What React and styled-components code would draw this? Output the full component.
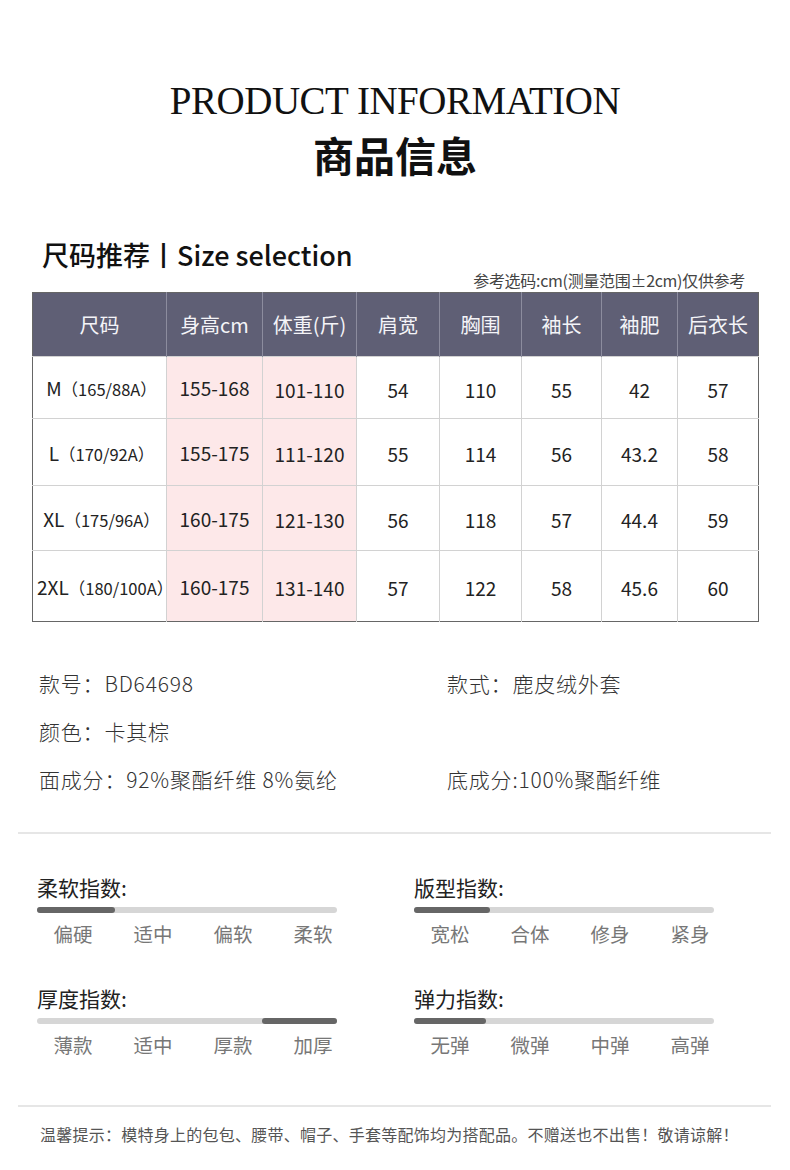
import React from "react";
import styled, { createGlobalStyle } from "styled-components";

const GlobalStyle = createGlobalStyle`
  html, body { margin: 0; padding: 0; background: #ffffff; }
  body { font-family: "Noto Sans CJK SC", "Noto Sans", sans-serif; color: #222; }
  * { box-sizing: border-box; }
`;

const Page = styled.div`
  width: 790px;
  min-height: 1170px;
  background: #fff;
  padding-top: 78px;
  padding-bottom: 20px;
`;

const Hero = styled.header`
  display: flex;
  flex-direction: column;
  align-items: center;
`;

const EnTitle = styled.h1`
  margin: 0;
  font-family: "Liberation Serif", "DejaVu Serif", serif;
  font-weight: 400;
  font-size: 39px;
  line-height: 46px;
  letter-spacing: -0.5px;
  color: #111;
`;

const CnTitle = styled.h2`
  margin: 5px 0 0;
  font-family: "Noto Sans CJK SC", sans-serif;
  font-weight: 700;
  font-size: 41px;
  line-height: 50px;
  color: #111;
`;

const SizeHead = styled.div`
  margin-top: 61px;
  padding: 0 45px 0 42px;
  display: flex;
  flex-direction: column;
`;

const SectionTitle = styled.h3`
  margin: 0;
  font-size: 27px;
  line-height: 30px;
  font-weight: 500;
  color: #111;
`;

const Note = styled.div`
  align-self: flex-end;
  font-size: 16px;
  line-height: 20px;
  color: #444;
  letter-spacing: -0.3px;
`;

const Table = styled.table`
  margin: 2px 0 0 32px;
  width: 726px;
  border-collapse: collapse;
  table-layout: fixed;
  border: 1px solid #666;
`;

const HeadCell = styled.th`
  background: #5f5f75;
  color: #f4f4f8;
  font-weight: 400;
  font-size: 20px;
  height: 64px;
  padding: 0;
  text-align: center;
  border-left: 1px solid #8c8c9e;
  &:first-child { border-left: none; }
`;

const Row = styled.tr`
  height: ${(p) => p.$h}px;
  border-top: 1px solid #d2d2d2;
`;

const Cell = styled.td`
  padding: ${(p) => (p.$raise ? "0" : "3px")} 0 0;
  text-align: center;
  font-size: 19px;
  font-weight: 400;
  color: #222;
  white-space: nowrap;
  background: ${(p) => (p.$pink ? "#fde8e9" : "#fff")};
  border-left: 1px solid #d2d2d2;
  &:first-child { border-left: none; padding-left: 4px; }
`;

const SizeSub = styled.span`
  font-size: 16.5px;
`;

const InfoGrid = styled.div`
  margin-top: 37px;
  padding-left: 39px;
  display: grid;
  grid-template-columns: 408px 1fr;
  grid-auto-rows: 48px;
  align-items: center;
  font-size: 21px;
  letter-spacing: 0.8px;
  font-weight: 300;
  color: #333;
`;

const Divider = styled.hr`
  margin: ${(p) => p.$mt}px 19px 0 18px;
  border: none;
  height: 2px;
  background: #e6e6e6;
`;

const IndexGrid = styled.div`
  margin-top: 39px;
  padding-left: 37px;
  display: grid;
  grid-template-columns: 377px 300px;
  row-gap: 37px;
`;

const IndexGroup = styled.div`
  display: flex;
  flex-direction: column;
`;

const IndexTitle = styled.div`
  font-size: 21px;
  line-height: 28px;
  color: #222;
`;

const Track = styled.div`
  position: relative;
  margin-top: 6px;
  width: 300px;
  height: 6px;
  border-radius: 3px;
  background: #d6d6d6;
`;

const Fill = styled.div`
  position: absolute;
  top: 0;
  bottom: 0;
  border-radius: 3px;
  background: #666;
`;

const Labels = styled.div`
  margin: 8px 0 0 -4px;
  display: grid;
  grid-template-columns: repeat(4, 80px);
`;

const Label = styled.span`
  text-align: center;
  font-size: 19.5px;
  line-height: 26px;
  color: #777;
`;

const Footer = styled.p`
  margin: 15px 0 0 40px;
  font-size: 16px;
  line-height: 24px;
  color: #555;
  letter-spacing: 0.25px;
`;

const headers = ["尺码", "身高cm", "体重(斤)", "肩宽", "胸围", "袖长", "袖肥", "后衣长"];
const widths = [134, 96, 94, 83, 82, 80, 76, 81];

const rows = [
  { size: "M", sub: "（165/88A）", h: "155-168", w: "101-110", vals: ["54", "110", "55", "42", "57"], rh: 62 },
  { size: "L", sub: "（170/92A）", h: "155-175", w: "111-120", vals: ["55", "114", "56", "43.2", "58"], rh: 67 },
  { size: "XL", sub: "（175/96A）", h: "160-175", w: "121-130", vals: ["56", "118", "57", "44.4", "59"], rh: 65 },
  { size: "2XL", sub: "（180/100A）", h: "160-175", w: "131-140", vals: ["57", "122", "58", "45.6", "60"], rh: 71 },
];

const indices = [
  { title: "柔软指数:", labels: ["偏硬", "适中", "偏软", "柔软"], left: 0, width: 78 },
  { title: "版型指数:", labels: ["宽松", "合体", "修身", "紧身"], left: 0, width: 76 },
  { title: "厚度指数:", labels: ["薄款", "适中", "厚款", "加厚"], left: 225, width: 75 },
  { title: "弹力指数:", labels: ["无弹", "微弹", "中弹", "高弹"], left: 0, width: 72 },
];

export default function App() {
  return (
    <Page>
      <GlobalStyle />
      <Hero>
        <EnTitle>PRODUCT INFORMATION</EnTitle>
        <CnTitle>商品信息</CnTitle>
      </Hero>

      <SizeHead>
        <SectionTitle>尺码推荐丨Size selection</SectionTitle>
        <Note>参考选码:cm(测量范围±2cm)仅供参考</Note>
      </SizeHead>

      <Table>
        <colgroup>
          {widths.map((w, i) => (
            <col key={i} style={{ width: w }} />
          ))}
        </colgroup>
        <thead>
          <tr>
            {headers.map((h) => (
              <HeadCell key={h}>{h}</HeadCell>
            ))}
          </tr>
        </thead>
        <tbody>
          {rows.map((r) => (
            <Row key={r.size} $h={r.rh}>
              <Cell $raise>
                {r.size}
                <SizeSub>{r.sub}</SizeSub>
              </Cell>
              <Cell $pink $raise>{r.h}</Cell>
              <Cell $pink>{r.w}</Cell>
              {r.vals.map((v, i) => (
                <Cell key={i}>{v}</Cell>
              ))}
            </Row>
          ))}
        </tbody>
      </Table>

      <InfoGrid>
        <span>款号：BD64698</span>
        <span>款式：鹿皮绒外套</span>
        <span>颜色：卡其棕</span>
        <span />
        <span>面成分：92%聚酯纤维 8%氨纶</span>
        <span>底成分:100%聚酯纤维</span>
      </InfoGrid>

      <Divider $mt={29} />

      <IndexGrid>
        {indices.map((g) => (
          <IndexGroup key={g.title}>
            <IndexTitle>{g.title}</IndexTitle>
            <Track>
              <Fill style={{ left: g.left, width: g.width }} />
            </Track>
            <Labels>
              {g.labels.map((l) => (
                <Label key={l}>{l}</Label>
              ))}
            </Labels>
          </IndexGroup>
        ))}
      </IndexGrid>

      <Divider $mt={47} />

      <Footer>温馨提示：模特身上的包包、腰带、帽子、手套等配饰均为搭配品。不赠送也不出售！敬请谅解！</Footer>
    </Page>
  );
}
